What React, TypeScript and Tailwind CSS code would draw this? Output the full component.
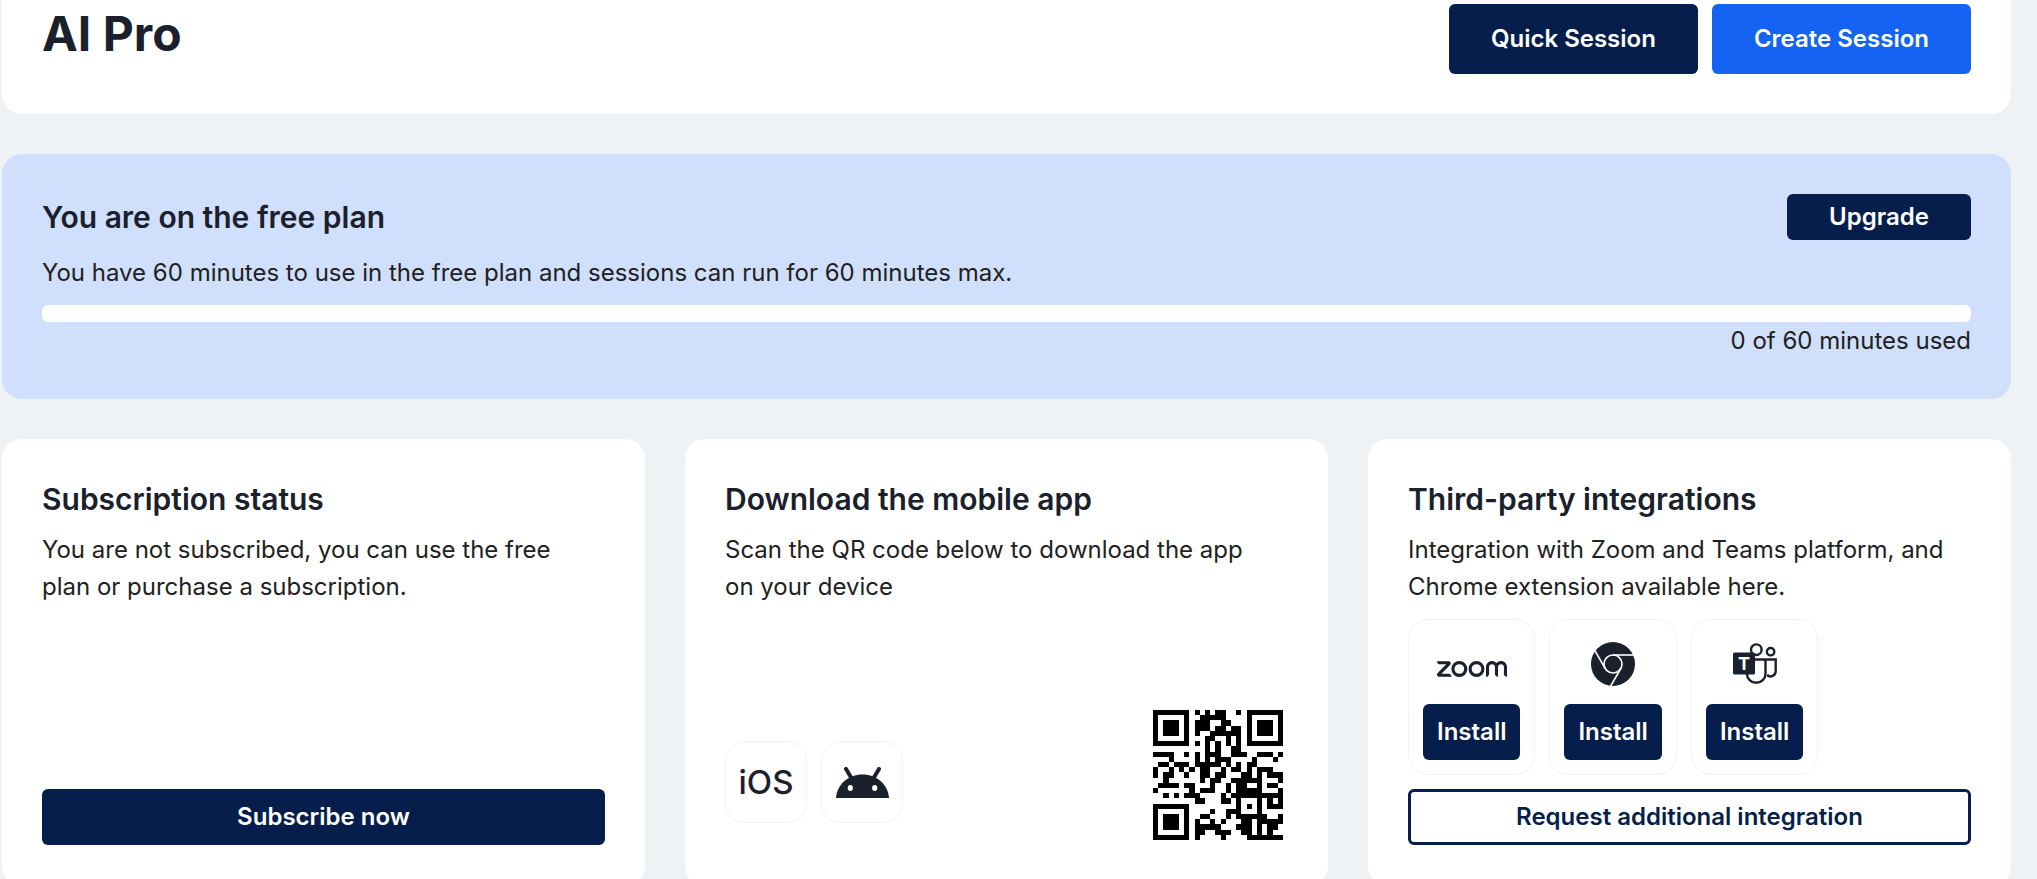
import type { ReactNode } from 'react';
import { SiZoom } from 'react-icons/si';

const APP_LINK = 'https://onelink.to/87pm5a';

// QR version 2, error correction L, mask 3
const QR_SIZE = 25;
const QR_DATA_WORDS = 34;
const QR_EC_WORDS = 10;
const QR_FORMAT = '111100010011101';

function gfMultiply(a: number, b: number) {
  let result = 0;
  for (let i = 7; i >= 0; i--) {
    result = (result << 1) ^ ((result >> 7) * 0x11d);
    result ^= ((b >> i) & 1) * a;
  }
  return result;
}

function errorWords(data: number[]) {
  const divisor: number[] = Array(QR_EC_WORDS).fill(0);
  divisor[QR_EC_WORDS - 1] = 1;
  let root = 1;
  for (let i = 0; i < QR_EC_WORDS; i++) {
    for (let j = 0; j < QR_EC_WORDS; j++) {
      divisor[j] = gfMultiply(divisor[j], root);
      if (j + 1 < QR_EC_WORDS) divisor[j] ^= divisor[j + 1];
    }
    root = gfMultiply(root, 2);
  }
  const result: number[] = Array(QR_EC_WORDS).fill(0);
  for (const word of data) {
    const factor = word ^ (result.shift() as number);
    result.push(0);
    divisor.forEach((d, i) => (result[i] ^= gfMultiply(d, factor)));
  }
  return result;
}

function buildQr(text: string) {
  const toBits = (value: number, length: number) =>
    value.toString(2).padStart(length, '0');

  let bits = '0100' + toBits(text.length, 8);
  for (const char of text) bits += toBits(char.charCodeAt(0), 8);
  bits += '0000';
  const words = (bits.match(/.{8}/g) ?? []).map((b) => parseInt(b, 2));
  for (let pad = 0xec; words.length < QR_DATA_WORDS; pad ^= 0xfd) words.push(pad);
  const stream = [...words, ...errorWords(words)]
    .map((word) => toBits(word, 8))
    .join('');

  const grid: (boolean | null)[][] = Array.from({ length: QR_SIZE }, () =>
    Array(QR_SIZE).fill(null)
  );

  // Finder patterns with their separators
  for (const [cy, cx] of [[3, 3], [3, 21], [21, 3]]) {
    for (let dy = -4; dy <= 4; dy++) {
      for (let dx = -4; dx <= 4; dx++) {
        const y = cy + dy;
        const x = cx + dx;
        if (y < 0 || x < 0 || y >= QR_SIZE || x >= QR_SIZE) continue;
        const dist = Math.max(Math.abs(dy), Math.abs(dx));
        grid[y][x] = dist !== 2 && dist !== 4;
      }
    }
  }
  // Alignment pattern
  for (let dy = -2; dy <= 2; dy++) {
    for (let dx = -2; dx <= 2; dx++) {
      grid[18 + dy][18 + dx] = Math.max(Math.abs(dy), Math.abs(dx)) !== 1;
    }
  }
  // Timing
  for (let i = 8; i < 17; i++) {
    grid[6][i] = i % 2 === 0;
    grid[i][6] = i % 2 === 0;
  }
  // Format info
  const format = [...QR_FORMAT].map((b) => b === '1');
  for (let i = 0; i < 6; i++) {
    grid[8][i] = format[i];
    grid[5 - i][8] = format[9 + i];
  }
  grid[8][7] = format[6];
  grid[8][8] = format[7];
  grid[7][8] = format[8];
  for (let i = 0; i < 7; i++) grid[24 - i][8] = format[i];
  for (let i = 0; i < 8; i++) grid[8][17 + i] = format[7 + i];
  grid[17][8] = true;

  // Data runs in two-column strips from the bottom right corner
  let index = 0;
  let upward = true;
  for (let right = 24; right > 0; right -= 2) {
    if (right === 6) right = 5;
    for (let step = 0; step < QR_SIZE; step++) {
      const y = upward ? QR_SIZE - 1 - step : step;
      for (const x of [right, right - 1]) {
        if (grid[y][x] !== null) continue;
        grid[y][x] = (stream[index++] === '1') !== ((x + y) % 3 === 0);
      }
    }
    upward = !upward;
  }
  return grid;
}

function QrCode({ value }: { value: string }) {
  const path = buildQr(value)
    .flatMap((row, y) => row.map((on, x) => (on ? `M${x} ${y}h1v1h-1z` : '')))
    .join('');
  return (
    <svg
      viewBox="0 0 25 25"
      className="h-[130px] w-[130px]"
      shapeRendering="crispEdges"
      role="img"
      aria-label="QR code"
    >
      <path d={path} fill="#000" />
    </svg>
  );
}

function AndroidIcon() {
  return (
    <svg width="53" height="31" viewBox="0 0 53 31" aria-hidden="true">
      <path d="M0 31C1 17.500 12 7.500 26.500 7.500S52 17.500 53 31z" fill="#1a202c" />
      <path
        d="M10 2l6 10M43 2l-6 10"
        stroke="#1a202c"
        strokeWidth="4"
        strokeLinecap="round"
      />
      <ellipse cx="14.300" cy="21" rx="2.600" ry="3" fill="#fff" />
      <ellipse cx="38.700" cy="21" rx="2.600" ry="3" fill="#fff" />
    </svg>
  );
}

function ChromeIcon() {
  return (
    <svg width="44" height="44" viewBox="0 0 44 44" aria-hidden="true">
      <circle cx="22" cy="22" r="22" fill="#1a202c" />
      <g stroke="#fff" strokeWidth="1.600" fill="none">
        <circle cx="22" cy="22" r="9" />
        <path d="M22 13h22" />
        <path d="M22 13h22" transform="rotate(120 22 22)" />
        <path d="M22 13h22" transform="rotate(240 22 22)" />
      </g>
    </svg>
  );
}

function TeamsIcon() {
  return (
    <svg width="44" height="42" viewBox="0 0 44 42" aria-hidden="true">
      <g stroke="#1a202c" strokeWidth="2.400" fill="none">
        <circle cx="23.300" cy="6.700" r="5.300" />
        <circle cx="37.600" cy="8.700" r="3.700" />
        <path d="M22 16.500H42.700V28a5.200 5.200 0 0 1-8.700 4" />
        <path d="M32.500 16.500V30.500a9.300 9.300 0 0 1-18.600 0" />
      </g>
      <rect x="0" y="9.500" width="22" height="22" rx="1.500" fill="#1a202c" />
      <text
        x="11"
        y="27"
        textAnchor="middle"
        fontSize="18"
        fontWeight="700"
        fill="#fff"
        fontFamily="Inter, sans-serif"
      >
        T
      </text>
    </svg>
  );
}

const integrations = [
  { name: 'Zoom', icon: <SiZoom className="mt-2.5 h-[70px] w-[70px]" /> },
  { name: 'Chrome', icon: <ChromeIcon /> },
  { name: 'Teams', icon: <TeamsIcon /> },
];

function Card({ title, text, children }: { title: string; text: string; children: ReactNode }) {
  return (
    <section className="flex flex-col rounded-[20px] bg-white px-10 pt-10 pb-[41px]">
      <h2 className="text-[30px] leading-10 font-semibold">{title}</h2>
      <p className="mt-3 pr-4 leading-[37px] text-[#212121]">{text}</p>
      {children}
    </section>
  );
}

export default function App() {
  return (
    <div className="h-screen overflow-hidden bg-[#eef2f5] pr-[26px] pl-0.5 font-[Inter,sans-serif] text-2xl text-[#1a202c]">
      <main className="flex flex-col gap-10">
        <header className="flex items-start justify-between rounded-b-[20px] bg-white px-10 pt-1 pb-10">
          <h1 className="text-5xl leading-[60px] font-bold">AI Pro</h1>
          <div className="flex gap-3.5">
            <button className="h-[70px] rounded-md bg-[#061e4c] px-[42px] font-semibold text-white">
              Quick Session
            </button>
            <button className="h-[70px] rounded-md bg-[#1463f3] px-[42px] font-semibold text-white">
              Create Session
            </button>
          </div>
        </header>

        <section className="rounded-[20px] bg-[#d0dffc] p-10">
          <div className="flex items-center justify-between">
            <h2 className="text-[30px] leading-10 font-semibold">You are on the free plan</h2>
            <button className="h-[46px] rounded-md bg-[#061e4c] px-[42px] font-semibold text-white">
              Upgrade
            </button>
          </div>
          <p className="mt-3.5 leading-[37px] text-[#212121]">
            You have 60 minutes to use in the free plan and sessions can run for 60 minutes max.
          </p>
          <div
            role="progressbar"
            aria-label="Minutes used"
            aria-valuenow={0}
            aria-valuemax={60}
            className="mt-3.5 h-[17px] rounded-md bg-white"
          />
          <p className="text-right leading-[37px] text-[#212121]">0 of 60 minutes used</p>
        </section>

        <div className="grid grid-cols-3 gap-10">
          <Card
            title="Subscription status"
            text="You are not subscribed, you can use the free plan or purchase a subscription."
          >
            <button className="mt-auto h-14 rounded-md bg-[#061e4c] font-semibold text-white">
              Subscribe now
            </button>
          </Card>

          <Card
            title="Download the mobile app"
            text="Scan the QR code below to download the app on your device"
          >
            <div className="mt-auto flex items-center justify-between">
              <div className="mt-3.5 flex gap-3.5">
                <div className="flex size-[82px] items-center justify-center rounded-[20px] border border-[#f1f2f5] text-[33px] font-medium">
                  iOS
                </div>
                <div className="flex size-[82px] items-center justify-center rounded-[20px] border border-[#f1f2f5]">
                  <AndroidIcon />
                </div>
              </div>
              <div className="p-[5px]">
                <QrCode value={APP_LINK} />
              </div>
            </div>
          </Card>

          <Card
            title="Third-party integrations"
            text="Integration with Zoom and Teams platform, and Chrome extension available here."
          >
            <div className="mt-3.5 flex gap-3.5">
              {integrations.map((item) => (
                <div
                  key={item.name}
                  className="flex flex-col items-center rounded-[20px] border border-[#f1f2f5] p-3.5"
                >
                  <div className="mb-2.5 flex h-[60px] items-center">{item.icon}</div>
                  <button
                    aria-label={`Install ${item.name}`}
                    className="h-14 rounded-md bg-[#061e4c] px-3.5 font-semibold text-white"
                  >
                    Install
                  </button>
                </div>
              ))}
            </div>
            <button className="mt-3.5 h-14 rounded-md border-3 border-[#061e4c] font-semibold text-[#061e4c]">
              Request additional integration
            </button>
          </Card>
        </div>
      </main>
    </div>
  );
}
